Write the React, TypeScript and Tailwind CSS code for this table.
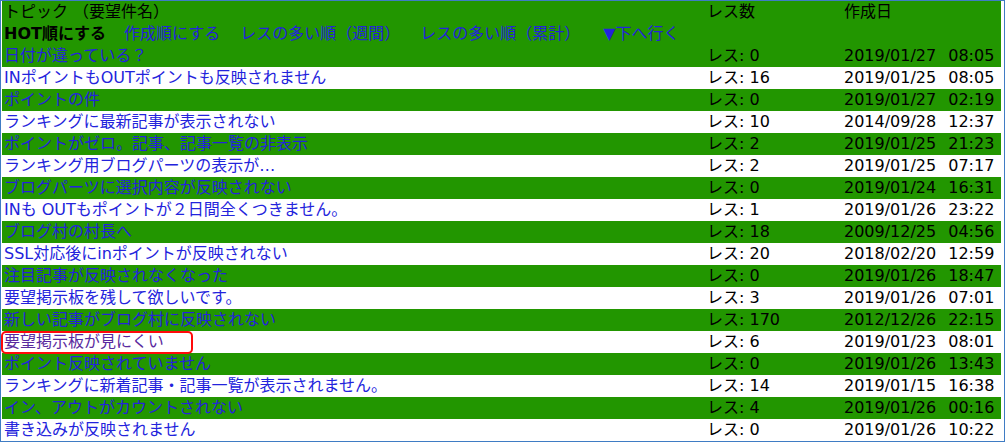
const rows: [string, number, string, string][] = [
  ["日付が違っている？", 0, "2019/01/27", "08:05"],
  ["INポイントもOUTポイントも反映されません", 16, "2019/01/25", "08:05"],
  ["ポイントの件", 0, "2019/01/27", "02:19"],
  ["ランキングに最新記事が表示されない", 10, "2014/09/28", "12:37"],
  ["ポイントがゼロ。記事、記事一覧の非表示", 2, "2019/01/25", "21:23"],
  ["ランキング用ブログパーツの表示が…", 2, "2019/01/25", "07:17"],
  ["ブログパーツに選択内容が反映されない", 0, "2019/01/24", "16:31"],
  ["INも OUTもポイントが２日間全くつきません。", 1, "2019/01/26", "23:22"],
  ["ブログ村の村長へ", 18, "2009/12/25", "04:56"],
  ["SSL対応後にinポイントが反映されない", 20, "2018/02/20", "12:59"],
  ["注目記事が反映されなくなった", 0, "2019/01/26", "18:47"],
  ["要望掲示板を残して欲しいです。", 3, "2019/01/26", "07:01"],
  ["新しい記事がブログ村に反映されない", 170, "2012/12/26", "22:15"],
  ["要望掲示板が見にくい", 6, "2019/01/23", "08:01"],
  ["ポイント反映されていません", 0, "2019/01/26", "13:43"],
  ["ランキングに新着記事・記事一覧が表示されません。", 14, "2019/01/15", "16:38"],
  ["イン、アウトがカウントされない", 4, "2019/01/26", "00:16"],
  ["書き込みが反映されません", 0, "2019/01/26", "10:22"],
]

export default function App() {
  return (
    <div className="h-[442px] w-[1005px] overflow-hidden border border-[#3f7cc4] bg-white pr-[3px] pl-px font-['DejaVu_Sans','Noto_Sans_CJK_JP',sans-serif] text-[16px] leading-[22px] text-black">
      {/* header */}
      <div className="grid grid-cols-[703px_137px_1fr] bg-[#229600]">
        <div className="pl-[2px]">
          <div className="h-[22px] whitespace-nowrap">トピック （要望件名）</div>
          <div className="flex h-[22px] gap-[20px] whitespace-nowrap">
            <span className="-mr-[2px] font-bold">HOT順にする</span>
            <a className="cursor-pointer text-[#2323dc]">作成順にする</a>
            <a className="cursor-pointer text-[#2323dc]">レスの多い順（週間）</a>
            <a className="cursor-pointer text-[#2323dc]">レスの多い順（累計）</a>
            <a className="ml-[3px] cursor-pointer text-[#2323dc]">▼下へ行く</a>
          </div>
        </div>
        <div className="h-[22px] pl-[2px]">レス数</div>
        <div className="h-[22px] pl-[2px]">作成日</div>
      </div>

      {/* topics */}
      {rows.map(([title, res, date, time], i) => (
        <div
          key={i}
          className={
            "grid h-[22px] grid-cols-[703px_137px_1fr] whitespace-nowrap " +
            (i % 2 === 0 ? "bg-[#229600]" : "bg-white")
          }
        >
          <div className="relative pl-[2px]">
            <a className={"cursor-pointer " + (i === 13 ? "text-[#5a2a9e]" : "text-[#2323dc]")}>{title}</a>
            {i === 13 && (
              <span className="absolute top-0 -left-px h-[23px] w-[192px] rounded-[5px] border-2 border-[#ff0a0a]" />
            )}
          </div>
          <div className="pl-[2px]">レス: {res}</div>
          <div className="pl-[2px]">
            {date}
            <span className="ml-[12px]">{time}</span>
          </div>
        </div>
      ))}
    </div>
  )
}
